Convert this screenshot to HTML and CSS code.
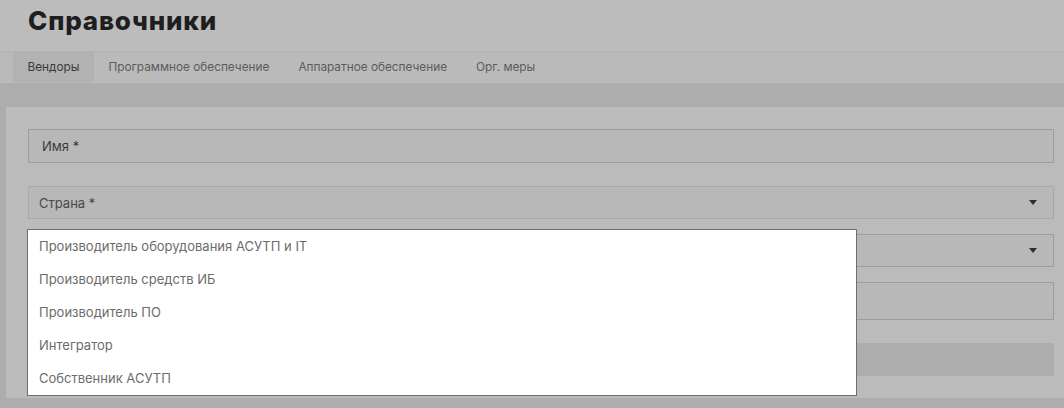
FILE: index.html
```html
<!DOCTYPE html>
<html lang="ru">
<head>
<meta charset="utf-8">
<title>Справочники</title>
<link rel="stylesheet" href="styles.css">
</head>
<body>
<header class="header">
  <h1 class="title">Справочники</h1>
</header>
<nav class="tabs">
  <div class="tab tab-active">Вендоры</div>
  <div class="tab">Программное обеспечение</div>
  <div class="tab">Аппаратное обеспечение</div>
  <div class="tab">Орг. меры</div>
</nav>
<main class="content">
  <section class="card">
    <div class="field field-name"><span class="label label-name">Имя *</span></div>
    <div class="field field-country"><span class="label">Страна *</span><span class="arrow"></span></div>
    <div class="select-wrap">
      <div class="field field-type"><span class="label"></span><span class="arrow"></span></div>
      <ul class="menu">
        <li class="menu-item">Производитель оборудования АСУТП и IT</li>
        <li class="menu-item">Производитель средств ИБ</li>
        <li class="menu-item">Производитель ПО</li>
        <li class="menu-item">Интегратор</li>
        <li class="menu-item">Собственник АСУТП</li>
      </ul>
    </div>
    <div class="field field-desc"></div>
    <div class="button"></div>
  </section>
</main>
</body>
</html>
```
FILE: styles.css
```css
html, body {
  margin: 0;
  padding: 0;
}
body {
  width: 1064px;
  height: 408px;
  overflow: hidden;
  background: #adadad;
  font-family: Inter, "Liberation Sans", Arial, sans-serif;
  font-size: 13px;
  color: #555;
}
.header {
  height: 52px;
  background: #bcbcbc;
  padding-left: 28px;
  box-sizing: border-box;
  border-bottom: 1px solid #b4b4b4;
}
.title {
  margin: 0;
  padding-top: 5px;
  font-family: Inter, "Liberation Sans", sans-serif;
  font-weight: 800;
  font-size: 26px;
  line-height: 32px;
  color: #1e1e1e;
  letter-spacing: 0.8px;
}
.tabs {
  display: flex;
  height: 31px;
  background: #bababa;
  padding-left: 13px;
}
.tab {
  padding: 0 14.5px;
  line-height: 30px;
  height: 30px;
  font-size: 11.8px;
  color: #5c5c5c;
}
.tab-active {
  background: #b2b2b2;
  color: #3a3a3a;
}
.content {
  padding: 24px 0 0 6px;
}
.card {
  height: 291px;
  box-sizing: border-box;
  background: #bbbbbb;
  padding: 22px 10px 0 22px;
  display: flex;
  flex-direction: column;
}
.field {
  box-sizing: border-box;
  height: 33px;
  border: 1px solid #9d9d9d;
  background: #b8b8b8;
  display: flex;
  align-items: center;
  justify-content: space-between;
  padding: 0 16px 0 10px;
  flex-shrink: 0;
}
.field-name {
  height: 34px;
  margin-bottom: 23px;
  padding-left: 13px;
}
.label {
  color: #484848;
}
.label-name {
  color: #3a3a3a;
}
.field-country {
  border-color: #a2aab0;
  margin-bottom: 15px;
}
.select-wrap {
  position: relative;
  margin-bottom: 15px;
}
.field-desc {
  height: 38px;
  margin-bottom: 23px;
}
.button {
  height: 33px;
  background: #adadad;
  flex-shrink: 0;
}
.arrow {
  width: 0;
  height: 0;
  border-left: 4.5px solid transparent;
  border-right: 4.5px solid transparent;
  border-top: 5px solid #2e2e2e;
}
.menu {
  position: absolute;
  left: -1px;
  top: -5px;
  width: 830px;
  box-sizing: border-box;
  margin: 0;
  padding: 0;
  list-style: none;
  background: #ffffff;
  border: 1px solid #6e6e6e;
  z-index: 2;
}
.menu-item {
  height: 33px;
  line-height: 33px;
  padding-left: 11px;
  color: #6c6c6c;
}
```
